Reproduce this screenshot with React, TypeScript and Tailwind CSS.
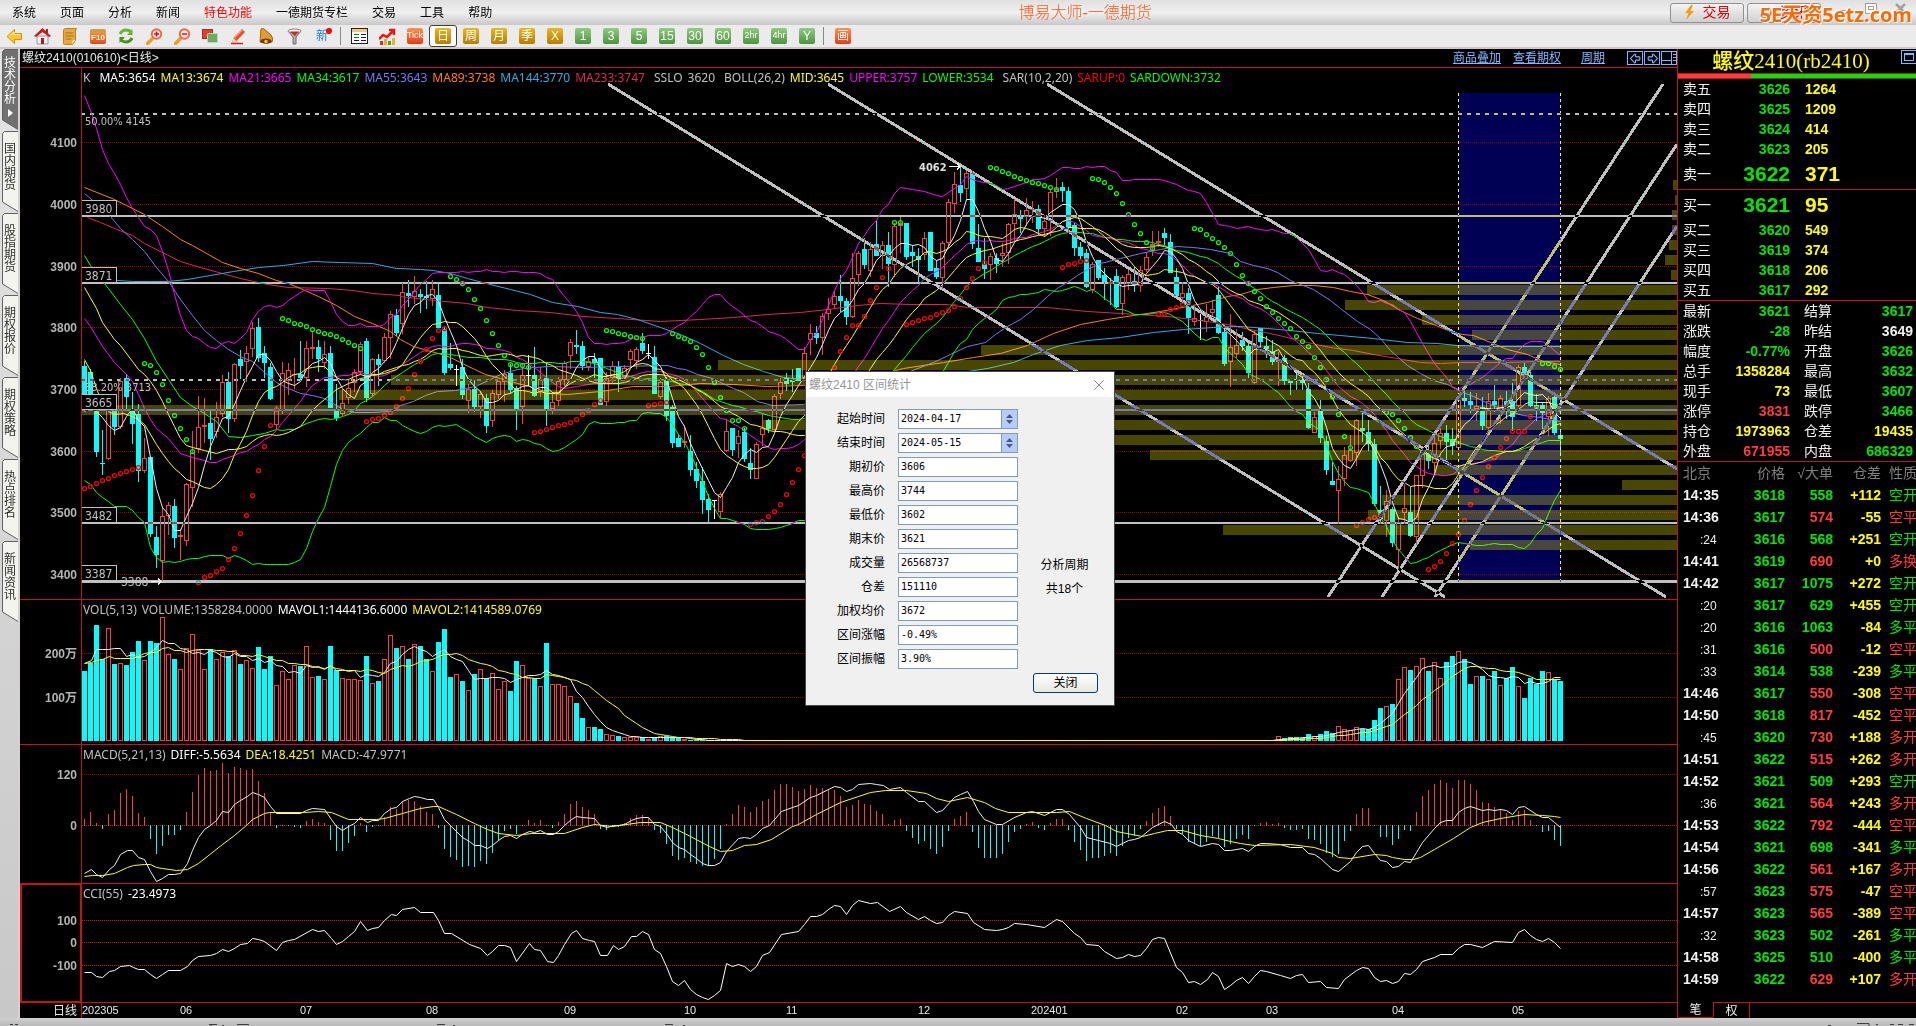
import type { ReactNode } from "react";
import { ArrowBigLeft, ArrowBigRight, X, Zap } from "lucide-react";

// origin x, origin y, x scale, y scale
type Frame = [number, number, number, number];
type Point = [number, number];
type Candle = { dir: string; high: number; top: number; bottom: number; low: number };

const A: Frame = [0, 40, 3, 2.8];
const B: Frame = [400, 80, 3, 2.904];
const C: Frame = [800, 80, 3, 2.45];
const D: Frame = [1240, 80, 3, 2.904];
const L: Frame = [0, 590, 2.45, 3];
const M: Frame = [640, 590, 2.45, 3];
const R: Frame = [1240, 590, 3, 3];

const WHITE = "#f0f0f0";
const YELLOW = "#ffff00";
const MAGENTA = "#ff00ff";
const GREEN = "#00ff00";
const INDIGO = "#7878f0";
const ORANGE = "#ff8000";
const BLUE = "#30a8e0";
const CRIMSON = "#dc2850";
const UP = "#ff3c3c";
const DOWN = "#00ffff";
const LINE = "#c41414";
const SILVER = "#c0c0c0";

const barX = (i: number) => 84 + i * 6;

function points([ox, oy, kx, ky]: Frame, text: string): Point[] {
  return text.split(" ").map((pair) => {
    const [x, y] = pair.split(",").map(Number);
    return [ox + x / kx, oy + y / ky];
  });
}

function candles([, oy, , ky]: Frame, text: string): Candle[] {
  return text.split(" ").map((item) => {
    const [high, top, bottom, low] = item
      .slice(1)
      .split(",")
      .map((v) => Math.round(oy + Number(v) / ky));
    return { dir: item[0], high, top, bottom, low };
  });
}

const CANDLES: Candle[] = [
  ...candles(
    A,
    "d900,912,1010,1035 d920,930,1000,1035 d1020,1035,1153,1167 d1092,1184,1188,1217 u1030,1035,1174,1176 d1030,1040,1083,1105 u945,955,1083,1090 d935,947,1000,1035 d985,1035,1074,1130 d1018,1048,1207,1238 u1115,1171,1206,1212 d1168,1168,1383,1392 d1361,1392,1441,1477 u1307,1334,1458,1515 u1293,1303,1332,1385 d1286,1305,1393,1421 u1370,1387,1392,1457 u1240,1244,1402,1418 u1095,1156,1255,1308 u998,1084,1146,1155 u1003,1079,1084,1128 d1038,1073,1116,1176 u1014,1056,1098,1115 u938,958,1048,1055 d930,958,1060,1100 u903,908,1060,1069 d868,893,912,948 u858,875,902,957 u790,807,866,887 d778,804,889,902 d857,877,904,945 d905,916,1005,1008 u1025,1032,1077,1088 u902,931,1035,1047 u905,925,955,993 u890,934,938,978 d843,934,945,950 u842,863,945,972 u818,860,864,893 d840,860,892,930 u844,878,905,922 d858,876,1030,1030 d962,1038,1058,1067 u978,1015,1046,1052 u950,975,1003,1020 u920,930,960,985 u845,850,930,935 d834,844,1001,1013 u890,894,992,1000 d880,893,909,970 u820,832,898,905 u760,766,835,893 d754,769,820,830",
  ),
  ...candles(
    B,
    "u590,617,708,738 d582,619,627,658 u570,612,631,650 d608,622,631,678 d585,627,634,665 u582,608,635,657 d592,625,719,720 d718,724,850,857 d765,825,835,842 w828,840,842,888 d810,834,914,925 u883,898,931,966 d870,898,951,963 u903,913,951,983 d912,923,1004,1024 u900,910,989,1007 u868,875,914,925 u842,853,876,934 d825,852,899,910 d890,895,955,1015 u825,857,951,998 w800,858,860,888 d775,857,919,922 u833,869,905,920 d820,866,955,1004 u905,936,956,970 u862,875,931,948 u815,822,871,890 u752,760,802,840 d727,770,774,796 d758,772,830,842 u805,815,834,845 d793,810,822,865 d808,808,943,943 u848,865,934,947 u815,830,866,880 d816,832,866,905 u828,836,862,870 u780,788,812,832 u774,780,817,840 d735,765,787,795 w768,792,794,810 d772,804,911,912 u866,876,921,925 d862,872,975,990 d945,951,1053,1068 d1028,1040,1065,1065 u1002,1049,1054,1068 d1032,1078,1134,1150 d1110,1130,1165,1185 d1125,1164,1219,1259 d1203,1217,1248,1285 w1220,1221,1223,1275 u1195,1203,1255,1273 u985,1020,1078,1080 d1010,1010,1074,1092 u1015,1035,1056,1098 d1010,1022,1100,1108 d1068,1112,1134,1158 u1052,1058,1158,1160 u970,1010,1032,1062 d985,988,1014,1024 u912,919,1015,1018 u865,878,911,925 d852,866,882,903 d840,870,876,905 d837,837,875,875",
  ),
  ...candles(
    C,
    "u655,669,730,735 u598,619,637,673 d603,619,633,648 u572,578,632,674 u535,560,574,587 u515,528,552,562 d477,528,542,568 d535,542,580,600 u425,484,580,582 u418,425,478,505 d388,415,453,462 u398,414,468,482 d345,402,430,430 u395,404,430,462 d373,404,452,507 u350,358,453,482 u335,351,357,425 d350,350,433,442 d405,421,430,457 d412,430,442,495 u373,388,428,440 d373,373,469,469 d442,460,482,487 u395,399,485,512 u292,300,400,412 u225,255,304,325 d213,258,276,300 u223,228,267,296 d222,228,402,415 d352,412,445,447 d388,452,464,488 u424,430,454,490 d425,437,450,474 u400,425,430,458 u350,353,424,452 u292,328,353,395 d318,335,340,375 u290,318,335,358 u296,315,318,350 d306,315,365,380 u330,345,364,385 u270,275,346,382 u240,268,275,288 d250,262,273,300 d262,272,360,372 d350,355,411,432 d398,409,430,440 d415,425,506,510 u445,450,515,523 d440,441,485,490 d460,478,494,540 d485,494,499,552 d463,480,555,558 u478,483,549,575 u465,475,500,515 d457,493,503,520 u455,466,505,520 u425,434,465,470 u370,403,406,430 u370,394,399,410 d363,375,388,405 d378,398,473,474 d460,483,528,530 u495,522,535,548 d510,523,583,622 u553,583,594,603 w572,588,590,638 u550,580,592,618 u540,560,570,580 d507,527,619,622 d605,618,697,700 u573,653,690,752 u610,650,672,682",
  ),
  ...candles(
    D,
    "d733,755,773,788 d765,772,850,865 u725,737,881,882 d720,720,760,775 d742,772,780,806 d755,790,818,828 u790,810,820,888 d800,808,874,885 d868,874,880,914 d850,868,872,900 d855,870,880,900 d880,896,1012,1013 u965,980,1024,1025 d930,962,1041,1055 d1035,1048,1134,1146 d1108,1164,1175,1176 u1122,1160,1194,1290 u1067,1090,1160,1180 u1030,1075,1107,1110 u985,988,1084,1120 d968,1010,1018,1052 d988,1022,1056,1076 d1042,1058,1232,1236 d1180,1250,1275,1290 u1192,1222,1280,1327 d1240,1246,1346,1357 u1270,1284,1366,1420 u1173,1244,1258,1290 d1182,1254,1323,1327 u1148,1148,1328,1350 u1070,1082,1151,1185 d1062,1075,1107,1130 u1038,1054,1112,1145 u1010,1025,1049,1072 d1002,1025,1050,1103 d1012,1042,1064,1088 u925,930,1068,1073 d902,923,932,950 d905,933,944,968 u908,948,956,990 d922,951,1004,1015 u908,933,1012,1014 d887,933,945,965 u915,923,958,998 d902,932,945,985 d880,933,978,1020 u828,833,948,950 d822,833,855,870 d845,857,947,950 d912,945,955,990 d935,943,966,1022 u918,923,980,1035 d918,922,1024,1030 d1015,1032,1042,1090",
  ),
];

const CLOSES = CANDLES.map((c) => (c.dir === "d" ? c.bottom : c.top));

function average(values: number[], n: number, band = 0): Point[] {
  const out: Point[] = [];
  for (let i = n - 1; i < values.length; i++) {
    const slice = values.slice(i - n + 1, i + 1);
    const mean = slice.reduce((a, b) => a + b, 0) / n;
    const dev = Math.sqrt(slice.reduce((a, b) => a + (b - mean) ** 2, 0) / n);
    out.push([barX(i), mean + dev * band]);
  }
  return out;
}

const PRICE_LINES: { color: string; pts: Point[] }[] = [
  {
    color: CRIMSON,
    pts: [
      ...points(A, "262,495 300,510 343,525 397,547 433,568 480,592 541,620 600,635 667,652 720,665 800,683 865,692 980,693 1060,700 1117,707 1200,713"),
      ...points(B, "0,628 100,638 200,648 260,660 350,667 450,675 550,684 650,692 780,701 900,695 1000,688 1100,680 1200,674"),
      ...points(C, "0,568 80,560 170,552 240,547 330,548 440,550 500,555 600,555 740,557 860,565 960,572 1100,578 1200,587 1300,600"),
      ...points(D, "0,718 60,728 130,742 200,760 270,775 340,783 400,795 470,808 540,819 600,822 660,820 800,820 900,815 960,815"),
    ],
  },
  {
    color: BLUE,
    pts: [
      ...points(A, "262,655 300,664 350,672 400,676 450,674 500,674 560,670 613,660 700,647 775,635 850,630 937,620 1020,622 1117,625 1189,637"),
      ...points(B, "0,547 60,550 100,553 150,560 200,575 270,592 330,608 390,622 455,645 530,656 600,673 650,680 710,695 780,718 840,738 900,765 970,800 1030,825 1090,845 1150,862 1210,868"),
      ...points(C, "500,713 560,705 640,692 700,672 780,650 860,637 960,630 1060,618 1150,611 1240,604 1300,603"),
      ...points(D, "0,715 80,720 150,726 230,735 300,740 400,750 500,760 590,765 650,770 750,773 960,773"),
    ],
  },
  {
    color: ORANGE,
    pts: [
      ...points(A, "253,412 343,445 379,463 433,487 487,522 541,557 577,575 667,622 721,637 775,653 829,673 865,680 901,693 955,717 1009,742 1063,772 1117,793 1171,815"),
      ...points(B, "0,753 40,772 80,785 115,793 150,805 205,830 255,853 300,866 350,880 400,892 450,908 500,912 600,903 700,889 800,889 900,879 1000,882 1100,888 1210,885"),
      ...points(C, "265,715 310,705 430,690 520,678 600,670 680,650 760,620 840,598 920,585 1000,575 1080,565 1160,553 1220,545 1280,528"),
      ...points(D, "0,622 50,608 100,600 160,594 220,594 280,602 330,612 380,622 430,640 480,668 530,690 580,708 630,728 665,737 700,740 750,762 800,780 860,795 910,815 960,825"),
    ],
  },
  {
    color: INDIGO,
    pts: [
      ...points(A, "253,428 290,458 331,492 361,525 397,557 433,590 469,635 505,675 541,725 577,770 613,813 649,840 685,865 721,885 757,900 793,930 829,957 865,975 901,988 937,995 973,1003 1009,1023 1027,1032 1063,1041 1117,1042 1171,1038"),
      ...points(B, "0,945 40,932 75,915 110,904 165,900 225,890 270,868 300,853 350,838 400,833 450,830 550,832 650,830 800,828 830,835 855,838 890,853 935,865 960,877 1000,895 1030,905 1070,933 1115,944 1210,942"),
      ...points(C, "200,735 320,715 400,692 450,672 500,652 555,643 585,622 620,603 660,585 700,562 740,530 775,507 800,495 830,478 860,463 900,448 960,435 1020,423 1080,415 1130,406 1180,408 1230,415 1290,425"),
      ...points(D, "0,525 40,538 80,545 110,557 150,582 180,592 220,607 270,640 300,663 350,700 390,722 420,750 450,785 500,828 540,850 580,870 620,884 655,900 700,918 750,940 800,960 850,972 900,978 960,990"),
    ],
  },
  {
    color: GREEN,
    pts: [
      ...points(A, "253,603 271,630 289,655 325,695 361,738 397,780 433,835 469,900 505,950 541,1000 577,1025 613,1045 649,1068 685,1108 721,1112 757,1105 793,1100 829,1090"),
      ...average(CLOSES, 34),
    ],
  },
  {
    color: GREEN,
    pts: [
      ...points(A, "253,1233 271,1243 289,1265 307,1280 325,1290 343,1305 379,1305 397,1317 415,1335 433,1350 451,1420 469,1447 487,1462 505,1460 523,1462 541,1459 559,1452 577,1451 595,1450 613,1445 631,1443 667,1443 685,1449"),
      ...average(CLOSES, 26, 2),
    ],
  },
  {
    color: MAGENTA,
    pts: [
      ...points(A, "253,155 271,195 289,245 307,305 325,345 343,372 361,403 379,440 397,470 415,495 433,522 451,530 469,545 487,590 505,645 523,710 541,770 559,813 577,830 595,835 613,848 631,860 649,863 667,848 685,843"),
      ...average(CLOSES, 26, -2),
    ],
  },
  {
    color: MAGENTA,
    pts: [
      ...points(A, "253,778 271,800 307,858 343,902 379,935 397,955 415,990 433,1030 451,1060 469,1085 505,1115 541,1155 577,1167"),
      ...average(CLOSES, 21),
    ],
  },
  {
    color: YELLOW,
    pts: [
      ...points(A, "253,692 289,750 307,790 343,838 361,855 397,900 415,920 433,935 451,955 469,980 487,1010 505,1048 523,1080 541,1115 559,1135 577,1140 613,1148 649,1155 685,1145"),
      ...average(CLOSES, 26),
    ],
  },
  {
    color: YELLOW,
    pts: [
      ...points(A, "253,893 271,925 289,975 307,1020 325,1040 343,1046 370,1043 388,1050 415,1060 433,1075"),
      ...average(CLOSES, 13),
    ],
  },
  {
    color: WHITE,
    pts: [...points(A, "253,1040 271,1030 289,1038 307,1055"), ...average(CLOSES, 5)],
  },
];

const SAR: [Frame, number, string, string][] = [
  [A, 0, "#ff0000", "1255 1250 1239 1233 1225 1219 1211 1206 1200 1195"],
  [A, 10, GREEN, "903 911 929 962 1007 1049 1085 1118 1152"],
  [A, 19, "#ff0000", "1517 1504 1497 1486 1477 1454 1423 1381 1331 1273 1205 1137 1079 1032"],
  [A, 33, GREEN, "779 785 791 796 801 810 815 819 824 829 838 846 855 863"],
  [A, 47, "#ff0000", "1066 1060 1057 1051 1042 1026"],
  [B, 53, "#ff0000", "924 893 855 815 780 750 727 719"],
  [B, 61, GREEN, "570 577 589 608 637 663 696 736 771 800 826 829 829 832"],
  [B, 75, "#ff0000", "1023 1018 1014 1009 1003 1000 994 985 971 957 942 928"],
  [B, 87, GREEN, "727 730 736 739 744 747 750"],
  [B, 94, "#ff0000", "945 942 937 934"],
  [B, 98, GREEN, "736 744 750 757 774 797 834 878 922 957 988 988 1012"],
  [B, 111, "#ff0000", "1288 1285 1280 1267 1252 1232 1203 1168 1131 1090"],
  [C, 125, "#ff0000", "702 665 629 600 600 579 540 508 482 460"],
  [C, 135, GREEN, "347 349"],
  [C, 137, "#ff0000", "599 594 589 584 580 574 569 564 554 535 508 484 461 445"],
  [C, 151, GREEN, "212 216 223 229 234 239 244 249 253 258 263 268"],
  [C, 163, "#ff0000", "457 452 448 444 441"],
  [C, 168, GREEN, "239 243 251 261 277 302 328 353 376 396 411"],
  [C, 179, "#ff0000", "574 572 562 555 548 543"],
  [C, 185, GREEN, "363 366 378 387 398 408 425 452"],
  [D, 193, GREEN, "565 590 613 634 655 675 692 707 721 742 759 773 803 834 869 918 971 1035 1067"],
  [D, 212, "#ff0000", "1291 1285 1276 1270 1262"],
  [D, 217, GREEN, "965 971 988 1012 1038 1064 1081"],
  [D, 224, "#ff0000", "1421 1412 1398 1374 1346 1319 1279 1232 1191 1154 1122 1096 1067 1041 1020 1018 1018 977 952"],
  [D, 243, GREEN, "821 823 831 840"],
];

const PROFILE = [
  1673, 1675, 1672, 1672, 1669, 1665, 1671, 1367, 1345, 1422, 1472, 981, 718, 391, 339, 82, 763,
  900, 1150, 1434, 1622, 1382, 1368, 1223, 1470,
];

const TRENDS = [
  [608, 84, 1445, 597],
  [828, 84, 1666, 597],
  [1047, 84, 1677, 469],
  [1328, 597, 1663, 84],
  [1382, 597, 1677, 144],
  [1435, 597, 1677, 226],
];

const LEVELS: [number, number, number][] = [
  [3980, 216, 2],
  [3871, 283, 2],
  [3665, 410, 2],
  [3482, 523, 2],
  [3387, 581, 3],
];

const VOLUMES = [
  ..."243 218 105 208 115 222 220 225 186 153 211 153 159 82 193 207 236 175 133 181 238 178 208 187 198 181 222 211 235 171 237 198 286 244 268 226 228 169 262 258 268 168 240 265 268 268 271 198 280 273 208 136 174 169 207 163 168 207 244 156 117 262 253 273 301 252 238 265 250 298 274 303 213 226 265 265 289 159 283 283 289 319 339 384 412 411 417 433 436 438 442 440 441 440 446 442 438 437 442 443 447".split(
    " ",
  ),
  ...Array(98).fill("449"),
  ..."438 443 441 441 443 432 438 432 423 430 408 417 419 411 417 417 390 354 348 342 267 231 240 229 205 243 216 265 216 198 184 207 282 259 258 268 243 286 264 231 289 324 264 282 243 247 268 273".split(
    " ",
  ),
].map((v) => Math.round(590 + Number(v) / 3));

const VOL_LINES = [
  {
    color: WHITE,
    pts: [...points(L, "207,220 222,211 236,176 251,178"), ...average(VOLUMES, 5)],
  },
  {
    color: YELLOW,
    pts: [
      ...points(L, "207,220 222,216 236,209 251,207 266,199 280,205 295,203 324,204 339,199 354,188 368,187"),
      ...average(VOLUMES, 13),
    ],
  },
];

const MACD_BARS =
  "688 667 699 714 672 660 609 597 618 669 681 743 788 765 731 731 718 667 606 555 534 543 540 519 549 531 534 540 537 573 609 669 711 706 706 708 711 693 687 696 699 746 779 779 755 734 699 722 709 705 682 652 656 633 630 633 648 666 672 711 773 797 806 827 825 827 809 818 785 750 720 714 728 706 690 699 690 706 711 696 672 642 633 651 660 672 714 716 709 708 700 684 676 676 684 716 725 758 794 806 800 812 818 824 824 803 773 702 672 645 651 666 651 633 627 600 582 582 591 603 597 585 594 594 597 600 618 651 645 630 642 645 663 672 702 690 687 720 740 758 750 773 788 767 720 687 678 666 722 770 800 800 800 788 752 722 714 702 696 711 716 699 687 687 716 752 776 809 800 800 794 785 794 764 740 734 714 693 669 654 648 678 714 728 752 758 764 752 734 740 767 758 743 731 743 706 699 696 702 699 711 716 716 713 743 746 758 785 797 788 749 719 672 654 654 706 737 737 761 743 716 719 666 618 600 582 570 579 594 570 570 582 600 636 639 651 657 669 690 663 660 690 706 722 719 746 764"
    .split(" ")
    .map((v) => Math.round(590 + Number(v) / 3));

const MACD_LINES = [
  {
    color: WHITE,
    pts: [
      ...points(L, "207,850 222,838 236,852 251,862 266,838 280,826 295,793 310,779 324,781 339,800 354,808 368,843 383,872 398,865 412,853 427,853 442,850 457,818 471,780 486,742 501,718 515,706 530,691 545,664 559,666 574,643 589,630 604,619 618,605 633,611 648,622 662,648 677,669 736,669 750,661 765,655 795,658 810,686 824,708 839,719 853,708 868,698 883,682 898,696 912,690 927,690 942,669 957,653 971,652 986,634 1001,624 1015,619 1030,622 1045,628 1060,628 1074,652 1089,686 1104,708 1118,722 1133,740 1148,752 1162,764 1177,764 1192,775 1206,766 1221,750 1236,738 1250,736 1265,745 1280,733 1295,724 1309,726 1324,721 1339,732 1354,733 1368,724 1383,706 1398,687 1412,679 1427,682 1456,685 1471,706 1486,712 1501,706 1515,706 1530,703 1545,690 1559,684"),
      ...points(M, "6,682 20,682 35,702 50,709 64,728 79,755 94,772 108,778 123,791 138,805 152,818 167,826 182,824 197,817 211,782 241,743 255,740 270,745 285,733 300,715 315,706 345,664 373,650 388,646 417,621 432,614 461,596 475,589 490,592 505,604 520,596 534,581 563,578 578,583 595,584 610,598 637,590 652,606 681,634 696,634 726,667 740,660 770,620 785,613 800,602 815,634 829,662 844,687 873,703 888,703 917,680 946,666 961,662 990,676 1020,656 1034,656 1050,672 1078,711 1093,740 1123,750 1152,759 1167,768 1196,750 1211,748 1225,740 1255,712 1285,692 1300,703 1314,724 1328,733 1343,750 1373,767 1402,758 1417,763 1432,780 1446,781"),
      ...points(R, "7,775 25,784 43,767 61,760 79,758 120,761 151,772 187,770 205,790 223,793 241,805 277,838 295,842 331,812 349,786 367,769 385,766 403,788 421,810 439,814 457,832 475,827 493,814 511,817 529,785 547,755 583,715 601,697 619,691 637,691 655,667 673,655 691,649 709,653 727,661 745,658 763,660 781,658 799,661 817,671 835,652 853,649 889,673 907,682 925,682 943,697 961,712"),
    ],
  },
  {
    color: YELLOW,
    pts: [
      ...points(L, "207,859 225,856 251,856 280,850 310,832 325,826 354,821 368,823 383,832 398,835 430,840 457,838 486,818 545,761 574,735 604,703 618,688 633,677 648,670 660,667 745,667 780,664 810,667 853,686 920,688 942,685 986,670 1001,664 1030,653 1060,647 1074,647 1118,671 1162,700 1192,717 1221,730 1265,734 1300,730 1383,729 1427,712 1456,703 1500,707"),
      ...points(M, "0,697 50,697 79,710 123,738 170,768 197,782 225,780 255,766 285,761 320,748 373,708 388,702 432,672 490,636 534,619 563,607 600,601 652,600 700,609 726,625 755,632 800,622 844,637 870,655 902,667 1020,667 1050,664 1093,685 1140,706 1167,723 1230,737 1260,730 1290,720 1328,721 1373,736 1417,744 1446,754"),
      ...points(R, "0,760 43,766 151,763 223,772 277,790 295,800 331,803 403,793 439,796 457,802 493,808 520,808 540,800 583,778 640,743 691,712 727,697 781,685 853,671 907,674 943,677 961,682"),
    ],
  },
];

const CCI_LINES = [
  {
    color: "#ffffff",
    pts: [
      ...points(L, "207,1147 222,1147 236,1157 251,1162 266,1144 280,1139 295,1127 315,1124 325,1130 339,1138 354,1138 368,1152 383,1163 398,1151 412,1141 442,1141 457,1127 471,1111 486,1097 515,1096 530,1090 545,1078 559,1084 574,1073 589,1063 604,1060 618,1045 633,1048 648,1054 677,1081 692,1057 706,1051 721,1048 765,1018 780,1024 795,1021 810,1045 824,1063 839,1054 853,1037 868,1024 883,994 898,1021 912,1015 927,1012 942,990 957,973 971,976 986,956 1015,952 1030,967 1060,967 1074,990 1089,1030 1104,1030 1148,1063 1177,1075 1192,1096 1206,1084 1221,1066 1236,1066 1250,1072 1265,1114 1295,1060 1309,1078 1324,1081 1339,1114 1354,1117 1368,1096 1383,1063 1398,1030 1412,1021 1427,1045 1442,1051 1456,1054 1471,1096 1486,1096 1501,1066 1515,1078 1530,1069 1545,1039 1559,1039"),
      ...points(M, "6,1024 20,1033 35,1078 50,1090 64,1128 79,1172 94,1186 108,1171 123,1198 138,1213 152,1222 167,1228 182,1216 197,1200 211,1118 225,1127 241,1121 256,1127 270,1144 285,1127 300,1094 315,1087 345,1033 388,1024 402,1001 417,977 432,979 447,973 461,956 475,946 490,948 505,973 520,946 534,931 563,940 580,937 610,964 637,949 652,967 681,986 696,977 711,990 726,1000 740,995 755,974 770,964 800,970 815,995 844,1018 873,1021 888,1018 902,1012 917,1000 946,1001 990,1012 1020,988 1034,994 1063,1030 1078,1040 1093,1063 1123,1066 1137,1084 1167,1105 1182,1102 1196,1093 1211,1099 1225,1096 1240,1075 1255,1046 1270,1042 1285,1043 1314,1132 1328,1145 1343,1177 1358,1174 1373,1183 1388,1168 1402,1147 1417,1157 1432,1198 1446,1184 1461,1171"),
      ...points(R, "7,1162 25,1180 43,1157 61,1141 79,1144 120,1154 151,1165 169,1156 187,1153 205,1177 241,1174 259,1192 295,1195 313,1168 349,1141 367,1132 385,1135 403,1162 421,1174 439,1171 457,1180 475,1174 493,1150 511,1153 529,1138 547,1114 583,1102 601,1093 637,1093 655,1075 673,1063 691,1063 727,1072 763,1054 817,1057 835,1027 853,1018 871,1036 889,1048 907,1054 925,1045 943,1057 961,1075"),
    ],
  },
];

const MENU = ["系统", "页面", "分析", "新闻", "特色功能", "一德期货专栏", "交易", "工具", "帮助"];
const SIDE_TABS = ["技术分析", "国内期货", "股指期货", "期权报价", "期权策略", "热点排名", "新闻资讯"];

const MA_LEGEND = [
  ["K", "text-[#c0c0c0] mr-1"],
  ["MA5:3654", "text-white"],
  ["MA13:3674", "text-[#ffff00]"],
  ["MA21:3665", "text-[#ff00ff]"],
  ["MA34:3617", "text-[#00ff00]"],
  ["MA55:3643", "text-[#7878f0]"],
  ["MA89:3738", "text-[#ff8000]"],
  ["MA144:3770", "text-[#30a8e0]"],
  ["MA233:3747", "text-[#dc2850] mr-1"],
  ["SSLO", "text-[#c0c0c0]"],
  ["3620", "text-[#c0c0c0] mr-1"],
  ["BOLL(26,2)", "text-[#c0c0c0]"],
  ["MID:3645", "text-[#ffff00]"],
  ["UPPER:3757", "text-[#ff00ff]"],
  ["LOWER:3534", "text-[#00ff00] mr-1"],
  ["SAR(10,2,20)", "text-[#c0c0c0]"],
  ["SARUP:0", "text-[#ff0000]"],
  ["SARDOWN:3732", "text-[#00ff00]"],
];

const VOL_LEGEND = [
  ["VOL(5,13)", "text-[#c0c0c0]"],
  ["VOLUME:1358284.0000", "text-[#c0c0c0]"],
  ["MAVOL1:1444136.6000", "text-white"],
  ["MAVOL2:1414589.0769", "text-[#ffff00]"],
];

const MACD_LEGEND = [
  ["MACD(5,21,13)", "text-[#c0c0c0]"],
  ["DIFF:-5.5634", "text-white"],
  ["DEA:18.4251", "text-[#ffff00]"],
  ["MACD:-47.9771", "text-[#c0c0c0]"],
];

const CCI_LEGEND = [
  ["CCI(55)", "text-[#c0c0c0]"],
  ["-23.4973", "text-white"],
];

const MONTHS: [string, number][] = [
  ["202305", 82],
  ["06", 180],
  ["07", 300],
  ["08", 426],
  ["09", 564],
  ["10", 684],
  ["11", 786],
  ["12", 918],
  ["202401", 1031],
  ["02", 1176],
  ["03", 1266],
  ["04", 1392],
  ["05", 1512],
];

const ASKS = [
  ["卖五", "3626", "1264"],
  ["卖四", "3625", "1209"],
  ["卖三", "3624", "414"],
  ["卖二", "3623", "205"],
  ["卖一", "3622", "371"],
];

const BIDS = [
  ["买一", "3621", "95"],
  ["买二", "3620", "549"],
  ["买三", "3619", "374"],
  ["买四", "3618", "206"],
  ["买五", "3617", "292"],
];

const G = "text-[#00e600]";
const Y = "text-[#ffff00]";
const RD = "text-[#ff3c3c]";
const W = "text-[#f0f0f0]";

const STATS = [
  ["最新", "3621", G, "结算", "3617", G],
  ["涨跌", "-28", G, "昨结", "3649", W],
  ["幅度", "-0.77%", G, "开盘", "3626", G],
  ["总手", "1358284", Y, "最高", "3632", G],
  ["现手", "73", Y, "最低", "3607", G],
  ["涨停", "3831", RD, "跌停", "3466", G],
  ["持仓", "1973963", Y, "仓差", "19435", Y],
  ["外盘", "671955", RD, "内盘", "686329", G],
];

const TICKS = [
  ["14:35", "3618", "558", G, "+112", "空开", G],
  ["14:36", "3617", "574", RD, "-55", "空平", RD],
  [":24", "3616", "568", G, "+251", "空开", G],
  ["14:41", "3619", "690", RD, "+0", "多换", RD],
  ["14:42", "3617", "1075", G, "+272", "空开", G],
  [":20", "3617", "629", G, "+455", "空开", G],
  [":20", "3616", "1063", G, "-84", "多平", G],
  [":31", "3616", "500", RD, "-12", "空平", RD],
  [":33", "3614", "538", G, "-239", "多平", G],
  ["14:46", "3617", "550", RD, "-308", "空平", RD],
  ["14:50", "3618", "817", RD, "-452", "空平", RD],
  [":45", "3620", "730", RD, "+188", "多开", RD],
  ["14:51", "3622", "515", RD, "+262", "多开", RD],
  ["14:52", "3621", "509", G, "+293", "空开", G],
  [":36", "3621", "564", RD, "+243", "多开", RD],
  ["14:53", "3622", "792", RD, "-444", "空平", RD],
  ["14:54", "3621", "698", G, "-341", "多平", G],
  ["14:56", "3622", "561", RD, "+167", "多开", RD],
  [":57", "3623", "575", RD, "-47", "空平", RD],
  ["14:57", "3623", "565", RD, "-389", "空平", RD],
  [":32", "3623", "502", G, "-261", "多平", G],
  ["14:58", "3625", "510", G, "-400", "多平", G],
  ["14:59", "3622", "629", RD, "+107", "多开", RD],
];

const FIELDS = [
  ["start", "起始时间", "2024-04-17"],
  ["end", "结束时间", "2024-05-15"],
  ["open", "期初价", "3606"],
  ["high", "最高价", "3744"],
  ["low", "最低价", "3602"],
  ["close", "期末价", "3621"],
  ["volume", "成交量", "26568737"],
  ["interest", "仓差", "151110"],
  ["vwap", "加权均价", "3672"],
  ["change", "区间涨幅", "-0.49%"],
  ["range", "区间振幅", "3.90%"],
];

function ToolButton({ label, children }: { label: string; children: ReactNode }) {
  return (
    <button aria-label={label} className="flex h-[22px] w-7 shrink-0 items-center justify-center">
      {children}
    </button>
  );
}

function PeriodButton({ text, kind }: { text: string; kind: "gold" | "green" | "red" }) {
  const fill = {
    gold: "from-[#e8b820] to-[#b87c00]",
    green: "from-[#90cc80] to-[#4c9440]",
    red: "from-[#ff9050] to-[#e83810]",
  }[kind];
  const active = text === "日";
  return (
    <button
      className={`flex h-[22px] w-7 shrink-0 items-center justify-center rounded-[3px] ${
        active ? "border border-[#404040] bg-white" : ""
      }`}
    >
      <span
        className={`flex size-4 items-center justify-center rounded-[2px] bg-linear-to-b text-white ${fill} ${
          text.length > 2 ? "text-[9px]" : text.length > 1 ? "text-[12px]" : "text-[12px]"
        }`}
      >
        {text}
      </span>
    </button>
  );
}

function ZoomIcon({ plus }: { plus: boolean }) {
  return (
    <svg width="17" height="17" viewBox="0 0 17 17">
      <path d="M6.500 10.500 1.500 15.500" stroke="#f0a020" strokeWidth="3.500" strokeLinecap="round" />
      <circle cx="10.500" cy="6" r="4.700" fill="#ffe8e0" stroke="#f06850" strokeWidth="2" />
      <path d={plus ? "M8 6h5M10.500 3.500v5" : "M8 6h5"} stroke="#e01010" strokeWidth="1.500" />
    </svg>
  );
}

function Toolbar() {
  return (
    <div className="flex h-[22px] items-center bg-[#ebebeb]">
      <ToolButton label="后退">
        <svg width="17" height="17" viewBox="0 0 17 17">
          <path d="M1 8.500 8.500 1.500v4h7v6h-7v4z" fill="#ffc828" stroke="#d89010" />
          <path d="M3.500 8 8 4v2.500h6" fill="none" stroke="#ffeca0" />
        </svg>
      </ToolButton>
      <ToolButton label="首页">
        <svg width="17" height="17" viewBox="0 0 17 17">
          <path d="M3 8h11v8H3z" fill="#f0f0f0" stroke="#999" />
          <path d="M8.500 0 17 8l-2 1-6.500-5L2 9 0 8z" fill="#cc1c1c" />
          <path d="M12 1h2v4h-2zM7 10h3v6H7z" fill="#a82020" />
        </svg>
      </ToolButton>
      <ToolButton label="便笺">
        <svg width="17" height="17" viewBox="0 0 17 17">
          <path d="M1.500 2.500q0-2 2-2h11q-1 1-1 3v9l-3 4h-8q-1.500 0-1-2z" fill="#e8a83c" stroke="#c08020" />
          <path d="M3.500 5h8M3.500 8h8M3.500 11h6" stroke="#a87018" />
          <path d="m10 16 .5-3.500 3-.5z" fill="#fff0c0" />
        </svg>
      </ToolButton>
      <ToolButton label="F10">
        <span className="flex h-[15px] w-4 items-center justify-center rounded-[2px] border-t-[3px] border-[#c8a048] bg-linear-to-b from-[#ff9030] to-[#e04818] text-[8px] font-bold text-white">
          F10
        </span>
      </ToolButton>
      <ToolButton label="刷新">
        <svg width="16" height="16" viewBox="0 0 16 16">
          <path d="M2 6q2-4 6-4 3 0 5 2" fill="none" stroke="#6cb430" strokeWidth="3" />
          <path d="M14.500 1v6H9z" fill="#6cb430" />
          <path d="M14 10q-2 4-6 4-3 0-5-2" fill="none" stroke="#489018" strokeWidth="3" />
          <path d="M1.500 15V9H7z" fill="#489018" />
        </svg>
      </ToolButton>
      <ToolButton label="放大">
        <ZoomIcon plus />
      </ToolButton>
      <ToolButton label="缩小">
        <ZoomIcon plus={false} />
      </ToolButton>
      <ToolButton label="叠加">
        <svg width="16" height="16" viewBox="0 0 16 16">
          <rect x="0.500" y="1.500" width="10" height="9" fill="#e04030" stroke="#b02820" />
          <rect x="5.500" y="5.500" width="10" height="9" rx="1" fill="#6cac60" stroke="#c0d8b8" />
        </svg>
      </ToolButton>
      <ToolButton label="画线">
        <svg width="16" height="17" viewBox="0 0 16 17">
          <path d="m2 15 1.500-5L12 1l3 3-8.500 9z" fill="#f04c28" />
          <path d="m2 15 1.500-5 3 3z" fill="#f8d8a0" />
          <path d="M4 10 12.500 1.500" stroke="#ff9c70" strokeWidth="1.500" />
          <path d="M1 15.500h12" stroke="#e01818" strokeWidth="1.500" />
        </svg>
      </ToolButton>
      <ToolButton label="预警">
        <svg width="16" height="17" viewBox="0 0 16 17">
          <path d="M3 1q1.500-1 3 0l7 6q3 4 1 7-5 3-12 0l.5-6z" fill="#e0a028" stroke="#a06010" />
          <ellipse cx="8" cy="13" rx="5.500" ry="2.500" fill="#703808" />
          <circle cx="8" cy="13.500" r="1.800" fill="#f0c040" />
        </svg>
      </ToolButton>
      <ToolButton label="筛选">
        <svg width="15" height="17" viewBox="0 0 15 17">
          <path d="M1 3 6 9v7h3V9l5-6z" fill="#b0b0b0" stroke="#707070" />
          <ellipse cx="7.500" cy="3" rx="6.500" ry="2" fill="#f0f0f0" stroke="#888" />
          <path d="M3 3.500h9L8 8z" fill="#e02020" />
        </svg>
      </ToolButton>
      <button className="relative h-[22px] w-7 shrink-0 text-[12px] text-[#2080e8]">
        新
        <span className="absolute top-[3px] right-1 size-[6px] rounded-full bg-[#ff0000]" />
      </button>
      <span className="mx-1 h-[18px] w-px bg-[#888]" />
      <ToolButton label="报价表">
        <svg width="17" height="16" viewBox="0 0 17 16" shapeRendering="crispEdges">
          <rect x="0.500" y="0.500" width="16" height="15" fill="#fff" stroke="#222" />
          <path d="M1 1h15v3H1z" fill="#f0c878" />
          <path d="M3 6.500h5M3 9.500h5" stroke="#108010" strokeWidth="1" />
          <path d="M3 12.500h5M10 6.500h5M10 9.500h5M10 12.500h5" stroke="#101080" strokeWidth="1" />
        </svg>
      </ToolButton>
      <ToolButton label="走势图">
        <svg width="17" height="17" viewBox="0 0 17 17">
          <path d="M1 13h3v4H1z" fill="#d83020" />
          <path d="M5 11h3v6H5zM13 10h3v7h-3z" fill="#f0b020" />
          <path d="M9 13h3v4H9z" fill="#40a040" />
          <path d="m0 11 4-4 4 2 6-6M10 2h5v5" fill="none" stroke="#e81818" strokeWidth="2.500" />
        </svg>
      </ToolButton>
      <PeriodButton text="Tick" kind="red" />
      {["日", "周", "月", "季", "X"].map((t) => (
        <PeriodButton key={t} text={t} kind="gold" />
      ))}
      {["1", "3", "5", "15", "30", "60", "2hr", "4hr", "Y"].map((t) => (
        <PeriodButton key={t} text={t} kind="green" />
      ))}
      <span className="mr-[5px] ml-[2px] h-[18px] w-px bg-[#888]" />
      <PeriodButton text="画" kind="red" />
    </div>
  );
}

function TitleBar() {
  return (
    <header className="relative flex h-[25px] items-center bg-linear-to-b from-[#e0e0e0] via-[#f0f0f0] to-[#c8c8c8] pl-3">
      <nav className="flex gap-6 text-[12px]">
        {MENU.map((m) => (
          <button key={m} className={m === "特色功能" ? "text-[#ff0000]" : "text-black"}>
            {m}
          </button>
        ))}
      </nav>
      <h1 className="flex-1 pl-2 text-center text-[16px] leading-6 font-light text-[#ff5a1e]">博易大师-一德期货</h1>
      <div className="flex gap-[3px]">
        <button className="flex h-5 w-[74px] items-center justify-center gap-2 rounded-[3px] border border-[#909090] bg-linear-to-b from-[#f4f4f4] to-[#d0d0d0] text-[14px] text-[#e00000]">
          <svg width="11" height="15" viewBox="0 0 11 15">
            <path d="M7 0 1 8h3.500L2 15l8-9H6.500L9 0z" fill="#f89c18" />
          </svg>
          交易
        </button>
        <button className="flex h-5 w-[74px] items-center justify-center gap-2 rounded-[3px] border border-[#909090] bg-linear-to-b from-[#f4f4f4] to-[#d0d0d0] text-[14px] text-[#e00000]">
          <span className="size-3 rounded-full border-2 border-[#8898a8]" />
          资讯
        </button>
      </div>
      <div className="flex h-4 w-[95px] items-center justify-end gap-4 self-start pr-2 text-[#a0a0a0]">
        <button aria-label="最小化" className="h-1 w-3 translate-y-1 border border-current bg-white" />
        <button aria-label="最大化" className="flex h-[11px] w-3 items-center justify-center border border-current bg-white">
          <span className="h-1 w-[6px] border border-current" />
        </button>
        <button aria-label="关闭窗口">
          <X size={15} strokeWidth={4} />
        </button>
      </div>
      <div className="absolute top-[3px] right-1 font-['Open_Sans','Noto_Sans_CJK_SC',sans-serif] text-[20px] leading-6 font-bold text-[#ff6a00] [text-shadow:1px_1px_0_#fff,-1px_-1px_0_#fff]">
        5E天资5etz.com
      </div>
    </header>
  );
}

function SideTabs() {
  return (
    <aside className="flex w-5 shrink-0 flex-col border-r-2 border-[#d8d0d0] bg-linear-to-b from-[#e4e4e4] to-[#c8c8c8]">
      {SIDE_TABS.map((t, i) => (
        <button key={t} className="relative h-[82px] w-[18px] text-[12px] leading-3">
          <svg width="18" height="82" className="absolute inset-0">
            <path
              d="M18 .5H4.500l-2 2V71L18 80.500"
              fill={i ? "#f4f4ee" : "#707070"}
              stroke="#606060"
            />
          </svg>
          <span
            className={`absolute left-1 flex w-3 flex-col items-center break-all ${
              i ? "top-3 text-[#303030]" : "top-2 text-white"
            }`}
          >
            {t}
            {i === 0 && (
              <svg width="5" height="8" className="mt-1">
                <path d="M0 0v8l5-4z" fill="#fff" />
              </svg>
            )}
          </span>
        </button>
      ))}
    </aside>
  );
}

function Legend({ items }: { items: string[][] }) {
  return (
    <div className="absolute top-[2px] left-[63px] flex gap-[5px] font-['Noto_Sans',sans-serif] text-[12px] leading-4 whitespace-nowrap">
      {items.map(([text, color]) => (
        <span key={text} className={color}>
          {text}
        </span>
      ))}
    </div>
  );
}

function Grid({ y, color = "#8c0000" }: { y: number; color?: string }) {
  return <path d={`M82 ${y}.5H3000`} stroke={color} strokeDasharray="1 1" />;
}

function AxisLabel({ y, children }: { y: number; children: ReactNode }) {
  return (
    <text x="77" y={y + 5} textAnchor="end" fill="#b4b4b4" className="text-[12px] font-bold">
      {children}
    </text>
  );
}

function Lines({ series }: { series: { color: string; pts: Point[] }[] }) {
  return (
    <g fill="none" shapeRendering="auto">
      {series.map((s, i) => (
        <polyline
          key={i}
          points={s.pts.map(([x, y]) => `${Math.round(x) + 0.5},${Math.round(y) + 0.5}`).join(" ")}
          stroke={s.color}
        />
      ))}
    </g>
  );
}

function PricePane() {
  return (
    <section className="relative h-[532px] border-b border-[#c41414]">
      <svg className="h-full w-full" shapeRendering="crispEdges">
        <rect width="100%" height="100%" fill="#000" />
        <g transform="translate(-20 -68)">
          <rect x="1459" y="93" width="102" height="489" fill="#000055" />
          {[142, 204, 266, 327, 389, 451, 512, 574].map((y, i) => (
            <g key={y}>
              <Grid y={y} />
              <AxisLabel y={y}>{4100 - i * 100}</AxisLabel>
            </g>
          ))}
          {CANDLES.map((c, i) => {
            const x = barX(i);
            const color = c.dir === "w" ? "#fff" : c.dir === "u" ? UP : DOWN;
            const h = Math.max(c.bottom - c.top, 1);
            return (
              <g key={i} fill={color}>
                <rect x={x} y={c.high} width="1" height={c.low - c.high} />
                {c.dir === "u" && h > 2 ? (
                  <rect x={x - 1.5} y={c.top + 0.5} width="4" height={h - 1} fill="#000" stroke={color} />
                ) : (
                  <rect x={x - 2} y={c.top} width="5" height={h} />
                )}
              </g>
            );
          })}
          <Lines series={PRICE_LINES} />
          <g fill="none" shapeRendering="auto" strokeWidth="1.25">
            {SAR.map(([f, start, color, ys]) =>
              ys.split(" ").map((v, i) => (
                <circle
                  key={`${start}-${i}`}
                  cx={barX(start + i) + 0.5}
                  cy={Math.round(f[1] + Number(v) / f[3]) + 0.5}
                  r="2"
                  stroke={color}
                />
              )),
            )}
          </g>
          {PROFILE.map((x, i) => (
            <rect key={i} x={x} y={180 + i * 15} width={1677 - x} height="10" fill="#ff0" opacity="0.28" />
          ))}
          <path d="M1458.500 93V582M1560.500 93V582" stroke="#ffff00" strokeDasharray="3 3" />
          <g stroke={SILVER}>
            {LEVELS.map(([v, y, w]) => (
              <path key={v} d={`M82 ${y}H3000`} strokeWidth={w} className="mix-blend-difference" />
            ))}
            {[114, 380].map((y) => (
              <path key={y} d={`M81 ${y}H3000`} strokeWidth="2" strokeDasharray="4 5" className="mix-blend-difference" />
            ))}
            {TRENDS.map(([x1, y1, x2, y2]) => (
              <line key={x1} x1={x1} y1={y1} x2={x2} y2={y2} strokeWidth="3" className="mix-blend-difference" />
            ))}
          </g>
          <g fill={SILVER} className="font-['DejaVu_Sans_Condensed','DejaVu_Sans',sans-serif] text-[12px]">
            {LEVELS.map(([v, y]) => (
              <g key={v}>
                <rect x="81.500" y={y - 15.5} width="35" height="15" fill="#000" stroke={SILVER} />
                <text x="85" y={y - 3}>
                  {v}
                </text>
              </g>
            ))}
            <text x="85" y="125" className="text-[11px]">
              50.00% 4145
            </text>
            <text x="85" y="391" className="text-[11px]">
              38.20% 3713
            </text>
            <text x="121" y="586">
              3388
            </text>
            <text x="919" y="171" className="font-bold" fill="#e0e0e0" fontSize="11">
              4062
            </text>
            <path d="M151 581.500h10m-3-3 3 3-3 3M949 166.500h11m-3-3 3 3-3 3" fill="none" stroke={WHITE} />
          </g>
          <path d="M81.500 68V600" stroke={LINE} />
        </g>
      </svg>
      <Legend items={MA_LEGEND} />
    </section>
  );
}

function VolumePane() {
  return (
    <section className="relative h-[145px] border-b border-[#c41414]">
      <svg className="h-full w-full" shapeRendering="crispEdges">
        <g transform="translate(-20 -600)">
          <Grid y={653} />
          <Grid y={697} />
          <AxisLabel y={653}>200万</AxisLabel>
          <AxisLabel y={697}>100万</AxisLabel>
          {VOLUMES.map((top, i) => {
            const x = barX(i);
            const rise = CANDLES[i].dir !== "d";
            return rise ? (
              <rect key={i} x={x - 1.5} y={top + 0.5} width="4" height={Math.max(740 - top, 0)} fill="#000" stroke={UP} />
            ) : (
              <rect key={i} x={x - 2} y={top} width="5" height={Math.max(741 - top, 1)} fill={DOWN} />
            );
          })}
          <Lines series={VOL_LINES} />
          <path d="M81.500 600V745" stroke={LINE} />
        </g>
      </svg>
      <Legend items={VOL_LEGEND} />
    </section>
  );
}

function MacdPane() {
  return (
    <section className="relative h-[139px] border-b border-[#c41414]">
      <svg className="h-full w-full" shapeRendering="crispEdges">
        <g transform="translate(-20 -745)">
          <Grid y={774} />
          <Grid y={825} color={LINE} />
          <AxisLabel y={774}>120</AxisLabel>
          <AxisLabel y={825}>0</AxisLabel>
          {MACD_BARS.map((y, i) => (
            <rect
              key={i}
              x={barX(i)}
              y={Math.min(y, 825)}
              width="1"
              height={Math.abs(825 - y) + 1}
              fill={y < 825 ? UP : DOWN}
            />
          ))}
          <Lines series={MACD_LINES} />
          <path d="M81.500 745V884" stroke={LINE} />
        </g>
      </svg>
      <Legend items={MACD_LEGEND} />
    </section>
  );
}

function CciPane() {
  return (
    <section className="relative h-[119px] border-b border-[#c41414]">
      <svg className="h-full w-full" shapeRendering="crispEdges">
        <g transform="translate(-20 -884)">
          <Grid y={920} color={LINE} />
          <Grid y={942} color={LINE} />
          <Grid y={965} color={LINE} />
          <AxisLabel y={920}>100</AxisLabel>
          <AxisLabel y={942}>0</AxisLabel>
          <AxisLabel y={965}>-100</AxisLabel>
          <Lines series={CCI_LINES} />
          <rect x="21" y="884" width="60" height="118" fill="none" stroke={LINE} strokeWidth="2" />
        </g>
      </svg>
      <Legend items={CCI_LEGEND} />
    </section>
  );
}

function ChartHeader() {
  return (
    <div className="flex h-[19px] items-center border-b border-[#c41414] pl-[2px] text-[12px] leading-4 text-[#e8e8e8]">
      <span className="flex-1">螺纹2410(010610)&lt;日线&gt;</span>
      <div className="flex items-center gap-3 text-[#80b8ff]">
        <a href="#overlay" className="underline">商品叠加</a>
        <a href="#options" className="underline">查看期权</a>
        <a href="#period" className="ml-2 underline">周期</a>
      </div>
      <div className="ml-[22px] flex gap-px text-[#80b8ff]">
        <button aria-label="左移" className="flex h-[14px] w-4 items-center justify-center border border-current">
          <ArrowBigLeft size={13} />
        </button>
        <button aria-label="右移" className="flex h-[14px] w-4 items-center justify-center border border-current">
          <ArrowBigRight size={13} />
        </button>
        <button aria-label="布局" className="h-[14px] w-4 border border-current">
          <svg width="14" height="12" shapeRendering="crispEdges" stroke="currentColor">
            <path d="M0 8.500h9M9.500 0v12M11 2.500h3M11 5.500h3M11 8.500h3" />
          </svg>
        </button>
      </div>
    </div>
  );
}

function DepthRow({ row, big }: { row: string[]; big: boolean }) {
  return (
    <div className={`flex items-center font-bold ${big ? "h-[30px] text-[21px]" : "h-5 text-[14px]"}`}>
      <span className="w-[50px] pl-[5px] text-[14px] font-normal text-[#f0f0f0]">{row[0]}</span>
      <span className="w-[62px] text-right text-[#00e600]">{row[1]}</span>
      <span className="pl-[15px] text-[#ffff00]">{row[2]}</span>
    </div>
  );
}

function QuotePanel() {
  return (
    <aside className="flex w-[239px] shrink-0 flex-col overflow-hidden border-l border-[#c41414]">
      <div className="relative h-6 pr-3 text-center font-['Liberation_Serif','Noto_Sans_CJK_SC',serif] text-[21px] leading-6 font-medium text-[#ffff00]">
        螺纹2410(rb2410)
        <button aria-label="还原" className="absolute top-px -right-px h-[14px] w-4 border border-[#80b8ff] p-[2px]">
          <span className="block h-2 w-[10px] border border-t-2 border-[#80b8ff]" />
        </button>
      </div>
      <div className="flex h-[6px] border-y border-[#c41414]">
        <span className="w-[73px] bg-[#ff3c3c]" />
        <span className="flex-1 bg-[#00e600]" />
      </div>
      {ASKS.map((r, i) => (
        <DepthRow key={r[0]} row={r} big={i === 4} />
      ))}
      <div className="border-t border-[#c41414]" />
      {BIDS.map((r, i) => (
        <DepthRow key={r[0]} row={r} big={i === 0} />
      ))}
      <div className="border-y border-[#c41414]">
        {STATS.map(([k1, v1, c1, k2, v2, c2]) => (
          <div key={k1} className="flex h-5 items-center text-[14px]">
            <span className="w-[42px] pl-[5px] text-[#f0f0f0]">{k1}</span>
            <span className={`w-[70px] text-right font-bold ${c1}`}>{v1}</span>
            <span className="w-[55px] pl-[14px] text-[#f0f0f0]">{k2}</span>
            <span className={`flex-1 pr-[3px] text-right font-bold ${c2}`}>{v2}</span>
          </div>
        ))}
      </div>
      <table className="w-[244px] table-fixed text-right text-[14px] font-bold">
        <thead>
          <tr className="h-[22px] font-normal text-[#808080]">
            <th className="w-[50px] pl-[5px] text-left font-normal">北京</th>
            <th className="w-[57px] font-normal">价格</th>
            <th className="w-12 font-normal whitespace-nowrap">√大单</th>
            <th className="w-12 font-normal">仓差</th>
            <th className="pl-2 text-left font-normal whitespace-nowrap">性质</th>
          </tr>
        </thead>
        <tbody>
          {TICKS.map(([time, price, lots, c, diff, kind, kc], i) => (
            <tr key={i} className="h-[22px]">
              <td className={`pl-[5px] text-left ${W}`}>
                {time[0] === ":" ? <span className="pl-[17px] text-[12px] font-normal">{time}</span> : time}
              </td>
              <td className={G}>{price}</td>
              <td className={c}>{lots}</td>
              <td className={Y}>{diff}</td>
              <td className={`pl-2 text-left font-normal whitespace-nowrap ${kc}`}>{kind}</td>
            </tr>
          ))}
        </tbody>
      </table>
      <div className="mt-auto flex h-4 text-[12px] leading-[14px] text-[#f0f0f0]">
        <button className="w-9 rounded-b-[2px] border-r border-b border-[#c41414]">笔</button>
        <button className="w-9 border-t border-r border-[#c41414]">权</button>
        <span className="flex-1 border-t border-[#c41414]" />
      </div>
    </aside>
  );
}

function StatsDialog() {
  return (
    <div
      role="dialog"
      aria-labelledby="stats-title"
      className="absolute top-[371px] left-[805px] flex h-[335px] w-[310px] flex-col border border-[#484848] bg-[#f0f0f0] text-[12px] text-black"
    >
      <div className="flex h-[25px] items-center justify-between bg-white pr-[6px] pl-[3px]">
        <h2 id="stats-title" className="text-[#969696]">螺纹2410 区间统计</h2>
        <button aria-label="关闭" className="text-[#808080]">
          <X size={18} strokeWidth={1.25} />
        </button>
      </div>
      <div className="flex pt-3">
        <div className="flex flex-col gap-1">
          {FIELDS.map(([id, label, value], i) => (
            <div key={id} className="flex h-5 items-center">
              <label htmlFor={id} className="w-[92px] pr-[13px] text-right">
                {label}
              </label>
              <div className="flex h-5 w-[120px] border border-[#7f9db9] bg-white">
                <input
                  id={id}
                  defaultValue={value}
                  className="h-4 w-full min-w-0 bg-transparent pl-[2px] font-['DejaVu_Sans_Mono',monospace] text-[10px] outline-none"
                />
                {i < 2 && (
                  <span className="flex w-4 shrink-0 flex-col items-center justify-center gap-[2px] border-l border-[#7f9db9] bg-[#b8ccf8]">
                    <button aria-label={`${label}增加`}>
                      <svg width="7" height="4" className="block">
                        <path d="M0 4 3.500 0 7 4z" fill="#445c88" />
                      </svg>
                    </button>
                    <button aria-label={`${label}减少`}>
                      <svg width="7" height="4" className="block">
                        <path d="m0 0 3.500 4L7 0z" fill="#445c88" />
                      </svg>
                    </button>
                  </span>
                )}
              </div>
            </div>
          ))}
        </div>
        <div className="flex-1 pt-36 pr-[3px] text-center leading-6">
          <p>分析周期</p>
          <p>共18个</p>
        </div>
      </div>
      <button className="mt-1 mr-4 h-5 w-[65px] self-end rounded-[3px] border border-[#003c74] bg-linear-to-b from-white to-[#e8e8e0] leading-4">
        关闭
      </button>
    </div>
  );
}

export default function App() {
  return (
    <div className="relative flex h-screen min-w-[1280px] flex-col overflow-hidden bg-black font-['Liberation_Sans','Noto_Sans_CJK_SC',sans-serif]">
      <TitleBar />
      <Toolbar />
      <div className="h-[2px] bg-[#d0c8c8]" />
      <main className="flex flex-1">
        <SideTabs />
        <div className="flex min-w-0 flex-1 flex-col">
          <ChartHeader />
          <PricePane />
          <VolumePane />
          <MacdPane />
          <CciPane />
          <svg className="h-[15px] w-full text-[11px]" fill="#e8e8e8">
            <g transform="translate(-20 0)">
              <text x="77" y="12" textAnchor="end" fontSize="12">
                日线
              </text>
              {MONTHS.map(([m, x]) => (
                <text key={m} x={x} y="11">
                  {m}
                </text>
              ))}
              <path d="M81.500 0V15" stroke={LINE} />
            </g>
          </svg>
        </div>
        <QuotePanel />
      </main>
      <footer className="h-2 bg-linear-to-b from-[#d0d0d0] to-[#b8b8b8]">
        <svg className="block h-2 w-full" fill="none" stroke="#404040">
          <path d="M10 6.500h3m2 0h3M209 6.500h8m-6 0v2m11-1h2M237 6.500h12M437 6.500h8m8 1h2M665 6.500h8m10 1h2M1828 7.500h3M1857 5.500h12v3M1876 6.500h2M1890 6.500h4m4 0h5m6 0h5" />
        </svg>
      </footer>
      <StatsDialog />
    </div>
  );
}
